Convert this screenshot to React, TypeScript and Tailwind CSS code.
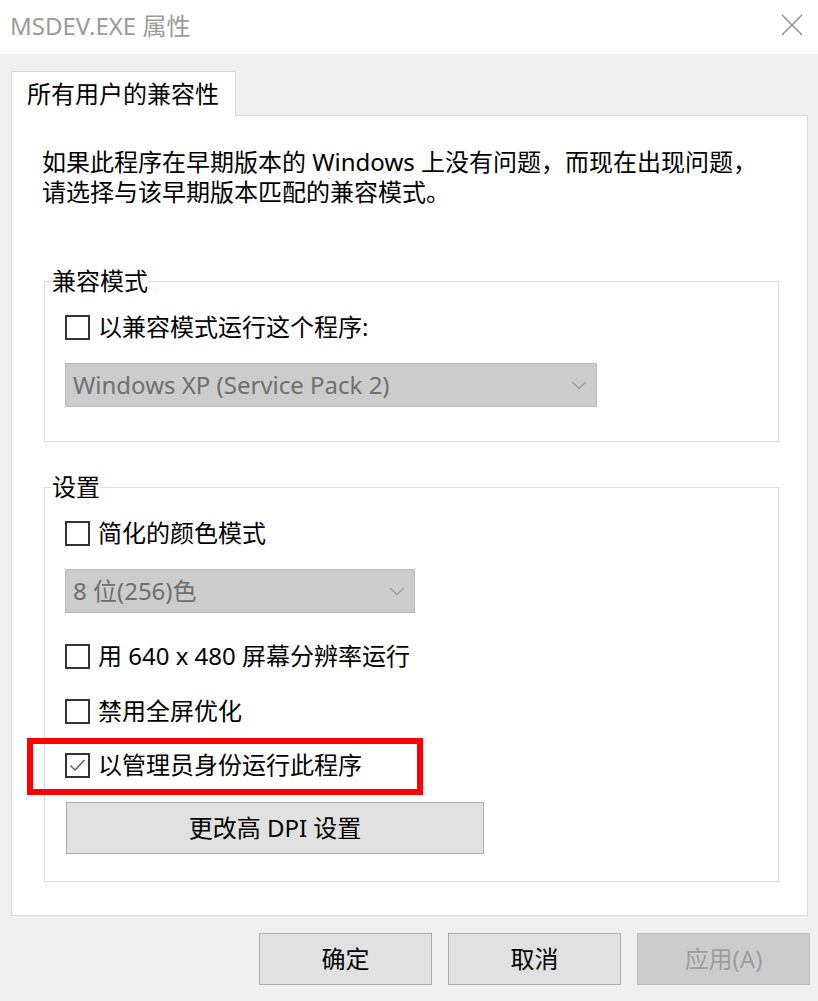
import React from "react";

const font = { fontFamily: '"Noto Sans", "Noto Sans CJK SC", sans-serif' };

function CheckBox({ checked }: { checked?: boolean }) {
  return (
    <span className="w-[25px] h-[25px] border-2 border-[#333333] bg-white flex items-center justify-center shrink-0">
      {checked && (
        <svg width="17" height="14" viewBox="0 0 17 14">
          <path d="M1.5 7.5 L6 12 L15.5 2" fill="none" stroke="#6a6a6a" strokeWidth="1.6" />
        </svg>
      )}
    </span>
  );
}

function CheckRow({ label, checked, className = "" }: { label: string; checked?: boolean; className?: string }) {
  return (
    <div className={`h-[30px] flex items-center gap-[8px] pl-[20px] ${className}`}>
      <CheckBox checked={checked} />
      <span className="text-[24px] leading-[30px] text-black whitespace-nowrap">{label}</span>
    </div>
  );
}

function Select({ value, width, className = "" }: { value: string; width: string; className?: string }) {
  return (
    <div
      className={`ml-[20px] h-[44px] ${width} bg-[#cccccc] border border-[#bcbcbc] flex items-center justify-between pl-[7px] pr-[9px] ${className}`}
    >
      <span className="text-[24px] text-[#6f6f6f] whitespace-nowrap">{value}</span>
      <svg width="16" height="9" viewBox="0 0 16 9">
        <path d="M1 1 L8 7.5 L15 1" fill="none" stroke="#9a9a9a" strokeWidth="1.2" />
      </svg>
    </div>
  );
}

function Button({ label, disabled, className = "" }: { label: string; disabled?: boolean; className?: string }) {
  return (
    <button
      className={`h-[52px] border text-[24px] flex items-center justify-center ${
        disabled ? "bg-[#cccccc] border-[#bfbfbf] text-[#9d9d9d]" : "bg-[#e1e1e1] border-[#adadad] text-black"
      } ${className}`}
    >
      {label}
    </button>
  );
}

export default function App() {
  return (
    <div className="w-[818px] h-[1001px] bg-[#f0f0f0] flex flex-col overflow-hidden" style={font}>
      <div className="h-[54px] bg-white flex items-center justify-between pl-[10px] pr-[15px] shrink-0">
        <span className="text-[24px] text-[#9b9b9b] -mt-[2px] whitespace-nowrap">MSDEV.EXE 属性</span>
        <svg width="22" height="22" viewBox="0 0 22 22" className="-mt-[4px]">
          <path d="M1 1 L21 21 M21 1 L1 21" stroke="#8c8c8c" strokeWidth="1.4" />
        </svg>
      </div>

      <div className="pl-[11px] pr-[10px] pt-[17px]">
        <div className="relative z-10 -mb-px w-[225px] h-[45px] bg-white border border-b-0 border-[#d9d9d9] flex items-center pl-[15px]">
          <span className="text-[24px] text-black whitespace-nowrap">所有用户的兼容性</span>
        </div>

        <div className="relative h-[801px] bg-white border border-[#d9d9d9] pt-[31px]">
          <div className="pl-[30px] text-[24px] leading-[30px] text-black whitespace-nowrap">
            <div className="h-[30px]">如果此程序在早期版本的 Windows 上没有问题，而现在出现问题，</div>
            <div className="h-[30px]">请选择与该早期版本匹配的兼容模式。</div>
          </div>

          <fieldset className="mt-[59px] ml-[32px] mr-[28px] border border-[#dcdcdc] pb-[34px]">
            <legend className="ml-[7px] text-[24px] leading-[30px] text-black">兼容模式</legend>
            <CheckRow label="以兼容模式运行这个程序:" className="mt-[16px]" />
            <Select value="Windows XP (Service Pack 2)" width="w-[532px]" className="mt-[21px]" />
          </fieldset>

          <fieldset className="mt-[30px] ml-[32px] mr-[28px] border border-[#dcdcdc] pb-[27px]">
            <legend className="ml-[7px] text-[24px] leading-[30px] text-black">设置</legend>
            <CheckRow label="简化的颜色模式" className="mt-[16px]" />
            <Select value="8 位(256)色" width="w-[350px]" className="mt-[21px]" />
            <CheckRow label="用 640 x 480 屏幕分辨率运行" className="mt-[28px]" />
            <CheckRow label="禁用全屏优化" className="mt-[25px]" />
            <CheckRow label="以管理员身份运行此程序" checked className="mt-[24px]" />
            <Button label="更改高 DPI 设置" className="mt-[22px] ml-[21px] w-[418px]" />
          </fieldset>

          {/* red annotation box */}
          <div className="absolute left-[15px] top-[622px] w-[396px] h-[57px] border-[6px] border-[#ff0000] pointer-events-none" />
        </div>

        <div className="flex justify-end gap-[16px] pt-[17px] -mr-[2px]">
          <Button label="确定" className="w-[173px]" />
          <Button label="取消" className="w-[173px]" />
          <Button label="应用(A)" disabled className="w-[173px]" />
        </div>
      </div>
    </div>
  );
}
